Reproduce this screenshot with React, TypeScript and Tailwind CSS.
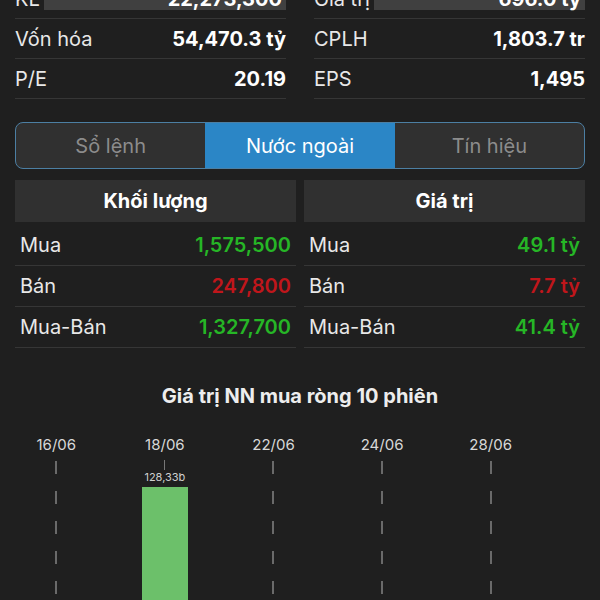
import React from "react";

interface StatRow {
  label: string;
  value: string;
  flash?: boolean;
}

const leftStats: StatRow[] = [
  { label: "KL", value: "22,273,300", flash: true },
  { label: "Vốn hóa", value: "54,470.3 tỷ" },
  { label: "P/E", value: "20.19" },
];

const rightStats: StatRow[] = [
  { label: "Giá trị", value: "696.0 tỷ", flash: true },
  { label: "CPLH", value: "1,803.7 tr" },
  { label: "EPS", value: "1,495" },
];

interface FlowRow {
  label: string;
  value: string;
  up: boolean;
}

const volumeRows: FlowRow[] = [
  { label: "Mua", value: "1,575,500", up: true },
  { label: "Bán", value: "247,800", up: false },
  { label: "Mua-Bán", value: "1,327,700", up: true },
];

const valueRows: FlowRow[] = [
  { label: "Mua", value: "49.1 tỷ", up: true },
  { label: "Bán", value: "7.7 tỷ", up: false },
  { label: "Mua-Bán", value: "41.4 tỷ", up: true },
];

const dates = ["16/06", "18/06", "22/06", "24/06", "28/06"];

const StatColumn = ({ rows }: { rows: StatRow[] }) => (
  <div className="flex flex-col">
    {rows.map((r) => (
      <div key={r.label} className="h-[40px] flex items-center border-b border-[#363636] text-[20px]">
        <span className="text-[#e8e8e8] whitespace-nowrap">{r.label}</span>
        {r.flash ? (
          <span className="flex-1 ml-1 h-[30px] -mt-[8px] bg-[#404040] flex items-end justify-end pr-1 leading-[22px] font-bold text-white">
            {r.value}
          </span>
        ) : (
          <span className="ml-auto font-bold text-white">{r.value}</span>
        )}
      </div>
    ))}
  </div>
);

const FlowTable = ({ title, rows }: { title: string; rows: FlowRow[] }) => (
  <div className="flex flex-col">
    <div className="h-[42px] bg-[#303030] flex items-center justify-center text-[20px] font-bold text-white">
      {title}
    </div>
    <div className="h-[3px]" />
    {rows.map((r) => (
      <div key={r.label} className="h-[41px] flex items-center px-[5px] border-b border-[#363636] text-[20px]">
        <span className="text-[#e8e8e8]">{r.label}</span>
        <span className={`ml-auto font-semibold ${r.up ? "text-[#26b626]" : "text-[#c0161b]"}`}>{r.value}</span>
      </div>
    ))}
  </div>
);

const Tabs = () => {
  const tabs = ["Sổ lệnh", "Nước ngoài", "Tín hiệu"];
  return (
    <div className="h-[47px] mx-[15px] rounded-[8px] border-[1.5px] border-[#4c7fa3] bg-[#303030] flex overflow-hidden">
      {tabs.map((t, i) => (
        <div
          key={t}
          className={`flex-1 flex items-center justify-center text-[20px] ${
            i === 1 ? "bg-[#2b86c6] text-white" : "text-[#8c8c8c]"
          }`}
        >
          {t}
        </div>
      ))}
    </div>
  );
};

const Chart = () => (
  <div className="flex flex-col">
    <div className="text-center text-[20px] font-bold text-[#ededed] mt-[33px]">Giá trị NN mua ròng 10 phiên</div>
    <div className="flex pl-[2px] w-[545px] mt-[23px]">
      {dates.map((d, i) => (
        <div key={d} className="flex-1 flex flex-col items-center">
          <span className="text-[15px] text-[#d8d8d8]">{d}</span>
          {i === 1 ? (
            <div className="flex flex-col items-center">
              <div className="w-px h-[10px] bg-[#777] mt-[3px]" />
              <span className="text-[11px] text-[#d0d0d0] leading-[14px]">128,33b</span>
              <div className="w-[46px] h-[120px] bg-[#6cc06a] mt-[3px]" />
            </div>
          ) : (
            <div className="flex flex-col items-center gap-[17px] mt-[4px]">
              {[0, 1, 2, 3, 4].map((k) => (
                <div key={k} className="w-[2px] h-[13px] bg-[#6a6a6a]" />
              ))}
            </div>
          )}
        </div>
      ))}
    </div>
  </div>
);

export default function App() {
  return (
    <div
      className="w-[600px] h-[600px] overflow-hidden bg-[#1f1f1f]"
      style={{ fontFamily: "Inter, 'Liberation Sans', sans-serif" }}
    >
      <div className="grid grid-cols-2 gap-[28px] px-[15px] -mt-[21px]">
        <StatColumn rows={leftStats} />
        <StatColumn rows={rightStats} />
      </div>
      <div className="h-[23px]" />
      <Tabs />
      <div className="grid grid-cols-2 gap-[8px] px-[15px] mt-[11px]">
        <FlowTable title="Khối lượng" rows={volumeRows} />
        <FlowTable title="Giá trị" rows={valueRows} />
      </div>
      <Chart />
    </div>
  );
}
